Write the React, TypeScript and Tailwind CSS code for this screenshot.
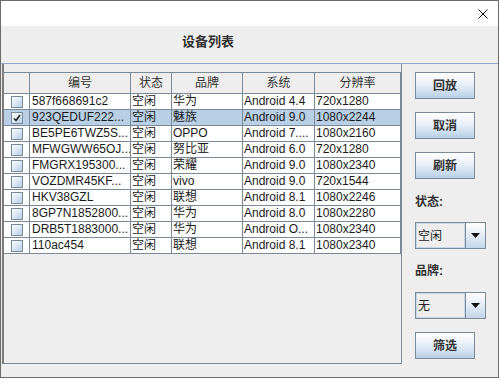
import React from 'react';

type Device = {
  id: string;
  state: string;
  brand: string;
  os: string;
  res: string;
  checked?: boolean;
  selected?: boolean;
};

const devices: Device[] = [
  { id: '587f668691c2', state: '空闲', brand: '华为', os: 'Android 4.4', res: '720x1280' },
  { id: '923QEDUF222...', state: '空闲', brand: '魅族', os: 'Android 9.0', res: '1080x2244', checked: true, selected: true },
  { id: 'BE5PE6TWZ5S...', state: '空闲', brand: 'OPPO', os: 'Android 7....', res: '1080x2160' },
  { id: 'MFWGWW65OJ...', state: '空闲', brand: '努比亚', os: 'Android 6.0', res: '720x1280' },
  { id: 'FMGRX195300...', state: '空闲', brand: '荣耀', os: 'Android 9.0', res: '1080x2340' },
  { id: 'VOZDMR45KF...', state: '空闲', brand: 'vivo', os: 'Android 9.0', res: '720x1544' },
  { id: 'HKV38GZL', state: '空闲', brand: '联想', os: 'Android 8.1', res: '1080x2246' },
  { id: '8GP7N1852800...', state: '空闲', brand: '华为', os: 'Android 8.0', res: '1080x2280' },
  { id: 'DRB5T1883000...', state: '空闲', brand: '华为', os: 'Android O...', res: '1080x2340' },
  { id: '110ac454', state: '空闲', brand: '联想', os: 'Android 8.1', res: '1080x2340' },
];

// column widths include the right grid line
const cols = ['w-[26px]', 'w-[101px]', 'w-[41px]', 'w-[71px]', 'w-[72px]', 'w-[86px]'];
const headers = ['', '编号', '状态', '品牌', '系统', '分辨率'];

function CheckBox({ checked }: { checked?: boolean }) {
  return (
    <div className="w-[12px] h-[12px] border border-[#7a8a99] bg-gradient-to-br from-white to-[#b8cfe5] flex items-center justify-center">
      {checked && (
        <svg width="8" height="8" viewBox="0 0 8 8">
          <path d="M1 4.5 L3 6.5 L7 1" stroke="#222" strokeWidth="1.6" fill="none" />
        </svg>
      )}
    </div>
  );
}

function MetalButton({ label }: { label: string }) {
  return (
    <div className="w-[60px] h-[27px] border border-[#7a8a99] bg-gradient-to-b from-white via-[#e4edf7] to-[#b8cfe5] flex items-center justify-center text-[12px] font-bold text-[#333]">
      {label}
    </div>
  );
}

function Combo({ value }: { value: string }) {
  return (
    <div className="w-[71px] h-[27px] border border-[#7a8a99] flex">
      <div className="flex-1 border border-[#c8d6e6] bg-[#eeeeee] flex items-center pl-[1px] text-[12px] text-[#222]">
        {value}
      </div>
      <div className="w-[20px] border-l border-[#7a8a99] bg-gradient-to-b from-white to-[#c4d6ea] flex items-center justify-center">
        <svg width="9" height="5" viewBox="0 0 9 5">
          <path d="M0 0 H9 L4.5 5 Z" fill="#111" />
        </svg>
      </div>
    </div>
  );
}

export default function App() {
  return (
    <div className="w-[500px] h-[380px] bg-white font-['Liberation_Sans','Noto_Sans_CJK_SC',sans-serif]">
      <div className="w-[499px] h-[378px] border border-[#6b6b6b] flex flex-col bg-[#eeeeee]">
        {/* title bar */}
        <div className="h-[25px] bg-white flex items-center justify-end pr-[10px]">
          <svg width="10" height="10" viewBox="0 0 10 10">
            <path d="M0.5 0.5 L9.5 9.5 M9.5 0.5 L0.5 9.5" stroke="#111" strokeWidth="1" />
          </svg>
        </div>

        {/* heading */}
        <div className="h-[37px] w-[414px] pt-[8px] text-center text-[13px] leading-[16px] font-bold text-[#333]">
          设备列表
        </div>
        <div className="h-px bg-[#8fa5cc]" />

        <div className="h-[300px] flex">
          {/* table scroll pane */}
          <div className="ml-[1px] w-[400px] h-[300px] border-l-2 border-l-[#7b7b7b] border-r border-r-[#7a8a99] border-b border-b-[#7a8a99] pt-[8px]">
            <div className="flex h-[22px] border-t border-b border-[#7a8a99] bg-[#eeeeee]">
              {headers.map((h, i) => (
                <div
                  key={i}
                  className={`${cols[i]} border-r border-[#7a8a99] flex items-center justify-center text-[12px] text-[#333]`}
                >
                  {h}
                </div>
              ))}
            </div>
            {devices.map((d) => {
              const cells = [d.id, d.state, d.brand, d.os, d.res];
              return (
                <div
                  key={d.id}
                  className={`flex h-[16px] border-b border-[#7a8a99] text-[12px] leading-[15px] text-[#1a1a1a] ${d.selected ? 'bg-[#b8cfe5]' : 'bg-white'}`}
                >
                  <div className={`${cols[0]} border-r border-[#7a8a99] flex items-center justify-center`}>
                    <CheckBox checked={d.checked} />
                  </div>
                  {cells.map((c, i) => (
                    <div
                      key={i}
                      className={`${cols[i + 1]} border-r border-[#7a8a99] whitespace-nowrap overflow-hidden ${i === 0 ? 'pl-[2px]' : 'pl-[1px]'}`}
                    >
                      {c}
                    </div>
                  ))}
                </div>
              );
            })}
          </div>

          {/* side controls */}
          <div className="flex-1 pl-[13px] pt-[8px] flex flex-col">
            <MetalButton label="回放" />
            <div className="mt-[13px]">
              <MetalButton label="取消" />
            </div>
            <div className="mt-[13px]">
              <MetalButton label="刷新" />
            </div>
            <div className="mt-[15px] h-[16px] leading-[16px] text-[12px] font-bold text-[#333]">状态:</div>
            <div className="mt-[12px]">
              <Combo value="空闲" />
            </div>
            <div className="mt-[14px] h-[16px] leading-[16px] text-[12px] font-bold text-[#333]">品牌:</div>
            <div className="mt-[13px]">
              <Combo value="无" />
            </div>
            <div className="mt-[13px]">
              <MetalButton label="筛选" />
            </div>
          </div>
        </div>
      </div>
    </div>
  );
}
